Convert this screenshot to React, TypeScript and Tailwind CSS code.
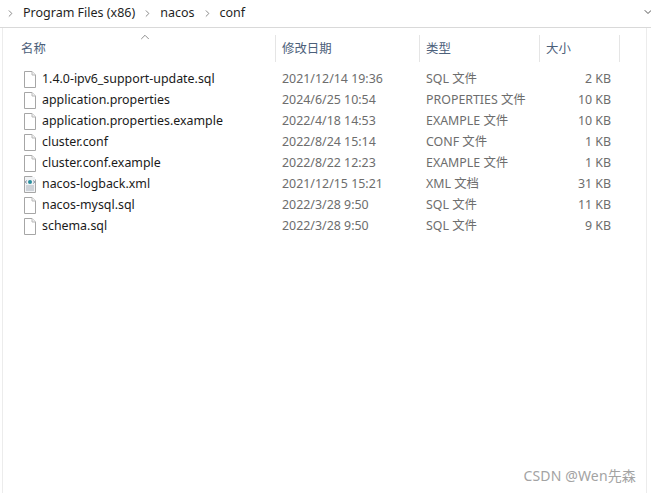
import { ChevronRight, ChevronDown, ChevronUp } from 'lucide-react';

const files = [
  { name: '1.4.0-ipv6_support-update.sql', date: '2021/12/14 19:36', type: 'SQL 文件', size: '2 KB' },
  { name: 'application.properties', date: '2024/6/25 10:54', type: 'PROPERTIES 文件', size: '10 KB' },
  { name: 'application.properties.example', date: '2022/4/18 14:53', type: 'EXAMPLE 文件', size: '10 KB' },
  { name: 'cluster.conf', date: '2022/8/24 15:14', type: 'CONF 文件', size: '1 KB' },
  { name: 'cluster.conf.example', date: '2022/8/22 12:23', type: 'EXAMPLE 文件', size: '1 KB' },
  { name: 'nacos-logback.xml', date: '2021/12/15 15:21', type: 'XML 文档', size: '31 KB', xml: true },
  { name: 'nacos-mysql.sql', date: '2022/3/28 9:50', type: 'SQL 文件', size: '11 KB' },
  { name: 'schema.sql', date: '2022/3/28 9:50', type: 'SQL 文件', size: '9 KB' },
];

function FileIcon({ xml }: { xml?: boolean }) {
  return (
    <svg width="14" height="17" viewBox="0 0 14 17" fill="none">
      <path d="M1.5 0.5H9L12.5 4V16.5H1.5Z" fill="#ffffff" stroke="#a6a6a6" />
      <path d="M9 0.5V4H12.5" fill="#f2f2f2" stroke="#b8b8b8" />
      {xml && (
        <>
          <rect x="2" y="1" width="10" height="15" fill="#f1f3f5" />
          <circle cx="7" cy="6" r="2" fill="#2a8f9e" />
          <path d="M3.5 4.5L2.5 6L3.5 7.5M10.5 4.5L11.5 6L10.5 7.5" stroke="#6d7f95" />
          <path d="M3 10H11M3 12H11M3 14H11" stroke="#a9b1bb" />
        </>
      )}
    </svg>
  );
}

function Crumb({ label }: { label: string }) {
  return (
    <>
      <ChevronRight className="w-[11px] h-[11px] text-[#7f7f7f] mx-[3px]" strokeWidth={2} />
      <span className="mx-[4px]">{label}</span>
    </>
  );
}

export default function App() {
  return (
    <div className="w-[651px] h-[493px] bg-white overflow-hidden relative text-[12.4px] font-['Noto_Sans','Noto_Sans_CJK_SC',sans-serif]">
      {/* Breadcrumb */}
      <div className="h-[28px] border-b border-[#d9d9d9] flex items-center pl-[5px] pr-[1px] text-[12.5px] text-[#1f1f1f]">
        <ChevronRight className="w-[11px] h-[11px] text-[#7f7f7f] mr-[2px]" strokeWidth={2} />
        <span className="ml-[5px] mr-[4px]">Program Files (x86)</span>
        <Crumb label="nacos" />
        <Crumb label="conf" />
        <ChevronDown className="w-[12px] h-[12px] text-[#555555] ml-auto -mt-[4px] -mr-[4px]" strokeWidth={2} />
      </div>

      <div className="flex h-[465px]">
        <div className="w-[3px] border-r border-[#ececec]" />
        <div className="w-[643px]">
          {/* Column headers */}
          <div className="relative h-[27px] mt-[7px] mb-[7px] flex items-center text-[#4c607a]">
            <ChevronUp className="absolute left-[135px] -top-[5px] w-[14px] h-[14px] text-[#666666]" strokeWidth={1.25} />
            <div className="w-[273px] h-full pl-[18px] pt-[2px] flex items-center border-r border-[#e5e5e5]">名称</div>
            <div className="w-[144px] h-full pl-[6px] pt-[2px] flex items-center border-r border-[#e5e5e5]">修改日期</div>
            <div className="w-[120px] h-full pl-[6px] pt-[2px] flex items-center border-r border-[#e5e5e5]">类型</div>
            <div className="w-[80px] h-full pl-[6px] pt-[2px] flex items-center border-r border-[#e5e5e5]">大小</div>
          </div>
          {/* File rows */}
          {files.map((f) => (
            <div key={f.name} className="h-[21px] flex items-center text-[#6d6d6d]">
              <div className="w-[273px] flex items-center pl-[20px] text-[#1a1a1a]">
                <FileIcon xml={f.xml} />
                <span className="ml-[5px]">{f.name}</span>
              </div>
              <div className="w-[144px] pl-[6px]">{f.date}</div>
              <div className="w-[120px] pl-[6px]">{f.type}</div>
              <div className="w-[71px] text-right">{f.size}</div>
            </div>
          ))}
        </div>
        <div className="w-[1px] bg-[#ececec]" />
      </div>

      <div className="absolute right-[15px] bottom-[7px] text-[14px] tracking-[0.15px] text-[#a3a3a3]">CSDN @Wen先森</div>
    </div>
  );
}
